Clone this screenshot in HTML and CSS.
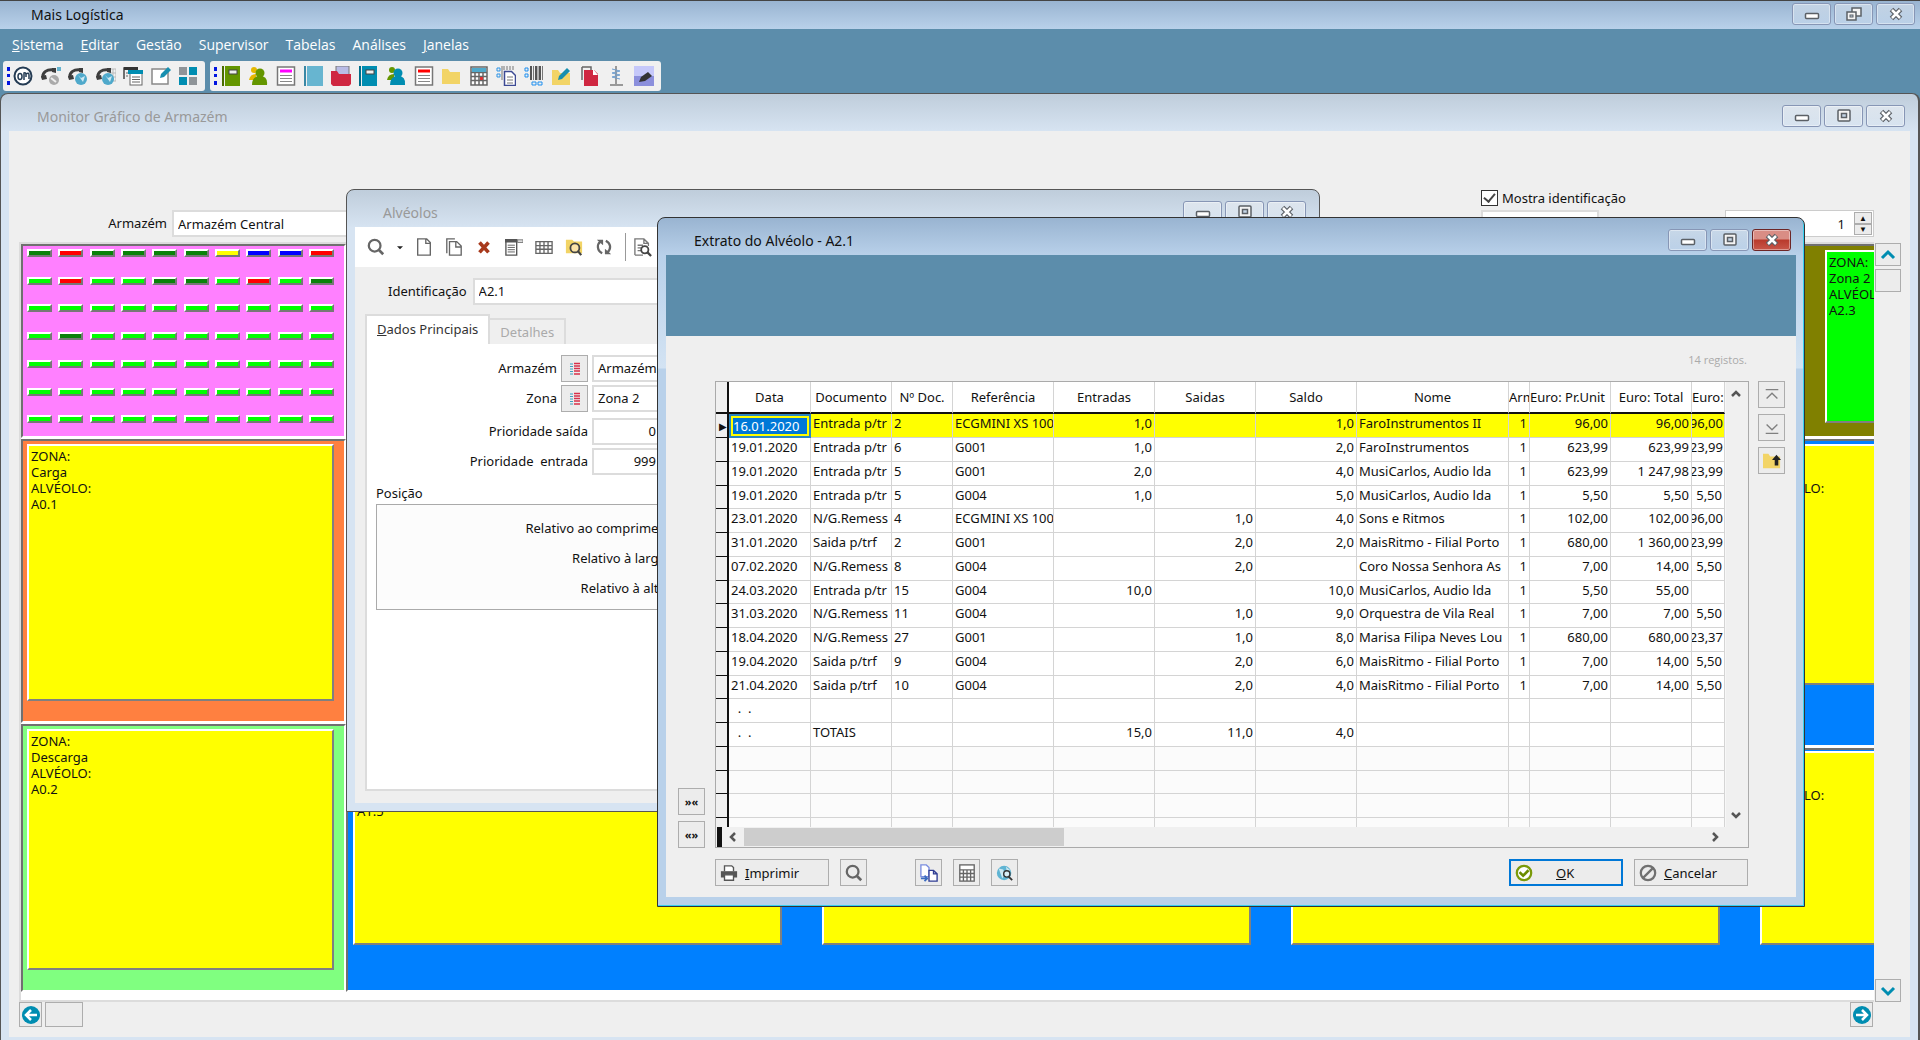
FILE: index.html
```html
<!DOCTYPE html>
<html lang="pt">
<head>
    <meta charset="utf-8">
    <title>Mais Logística</title>
    <link rel="stylesheet" href="styles.css">
</head>
<body>
    <!-- shared icons -->
    <svg class="defs" aria-hidden="true">
        <symbol id="i-min" viewBox="0 0 16 14"><rect x="1.5" y="6.5" width="13" height="5" rx="1" fill="#fff" stroke="#5b6066" stroke-width="1.5"/></symbol>
        <symbol id="i-max" viewBox="0 0 16 14"><rect x="2" y="1" width="12" height="11" rx="1" fill="#f4f4f4" stroke="#5b6066" stroke-width="1.5"/><rect x="5.5" y="4.5" width="5" height="4" fill="#c5d5e6" stroke="#5b6066" stroke-width="1.5"/></symbol>
        <symbol id="i-restore" viewBox="0 0 16 14"><rect x="6" y="1" width="9" height="8" fill="#f4f4f4" stroke="#5b6066" stroke-width="1.5"/><rect x="1" y="5" width="9" height="8" fill="#f4f4f4" stroke="#5b6066" stroke-width="1.5"/><rect x="4" y="8" width="3" height="2" fill="#c5d5e6" stroke="#5b6066"/></symbol>
        <symbol id="i-close" viewBox="0 0 16 14"><path d="M3.5 2.5l9 9M12.5 2.5l-9 9" stroke="#5b6066" stroke-width="5"/><path d="M4 3l8 8M12 3l-8 8" stroke="#fff" stroke-width="2.5"/></symbol>
        <symbol id="i-search" viewBox="0 0 20 20"><circle cx="8.5" cy="8.5" r="6.5" fill="none" stroke="#666" stroke-width="2.5"/><path d="M13 13l5 5" stroke="#666" stroke-width="3"/></symbol>
        <symbol id="i-list" viewBox="0 0 12 14"><path d="M1 2h3M1 4.5h3M1 7h3M1 9.5h3M1 12h3" stroke="#3aa0c0"/><path d="M5 1.5h6M5 4h6M5 6.5h6M5 9h6M5 12h6" stroke="#d6304a" stroke-width="1.5"/></symbol>
        <symbol id="i-calc" viewBox="0 0 20 20"><rect x="2" y="1" width="16" height="18" fill="#fff" stroke="#666" stroke-width="1.5"/><path d="M2 6.5h16M2 10.5h16M2 14.5h16M6 6.5V19M10 6.5V19M14 6.5V19" stroke="#666" stroke-width="1.5"/></symbol>
        <symbol id="i-phone" viewBox="0 0 20 20"><path d="M2 12C1 6 6 3 13 4" fill="none" stroke="#3d3d3d" stroke-width="3"/><path d="M0 10l5-1 1 4-5 1zM11 2l4 0 0 5-4-1z" fill="#3d3d3d"/></symbol>
    </svg>

    <header class="app-title">
        <h1>Mais Logística</h1>
        <div class="win-buttons">
            <button aria-label="Minimizar"><svg><use href="#i-min"/></svg></button>
            <button aria-label="Restaurar"><svg><use href="#i-restore"/></svg></button>
            <button aria-label="Fechar"><svg><use href="#i-close"/></svg></button>
        </div>
    </header>

    <nav class="menu">
        <a href="#"><u>S</u>istema</a>
        <a href="#"><u>E</u>ditar</a>
        <a href="#">Gestão</a>
        <a href="#">Supervisor</a>
        <a href="#">Tabelas</a>
        <a href="#">Análises</a>
        <a href="#"><u>J</u>anelas</a>
    </nav>

    <div class="toolbars">
        <div class="toolbar toolbar-main">
            <i class="grip"></i>
            <button aria-label="Ligar"><svg viewBox="0 0 20 20"><circle cx="10" cy="10" r="8.5" fill="#fff" stroke="#243b53" stroke-width="2"/><ellipse cx="7" cy="10.5" rx="2" ry="3" fill="none" stroke="#243b53" stroke-width="1.5"/><path d="M11 14V7q2-1 2 2v2M13 8q3-2 3 1v4" fill="none" stroke="#243b53" stroke-width="1.5"/></svg></button>
            <button aria-label="Telefone"><svg viewBox="0 0 20 20"><use href="#i-phone"/><circle cx="13" cy="14" r="5" fill="#aaa"/><path d="M10 12l5 4" stroke="#eee" stroke-width="2"/><rect x="16" y="1" width="4" height="4" fill="#65b3cf"/></svg></button>
            <button aria-label="Chamada"><svg viewBox="0 0 20 20"><use href="#i-phone"/><circle cx="13" cy="13" r="6" fill="#4fa9cb"/><path d="M10 9l3 3 4-2-2 6z" fill="#cfe9f3"/></svg></button>
            <button aria-label="Chamadas"><svg viewBox="0 0 20 20"><path d="M13 3h7v12h-6M13 7h7M13 11h7M17 3v12" fill="none" stroke="#bbb"/><use href="#i-phone"/><circle cx="12" cy="13" r="6" fill="#4fa9cb"/><path d="M9 9l3 3 4-2-2 6z" fill="#cfe9f3"/></svg></button>
            <button aria-label="Janelas"><svg viewBox="0 0 20 20"><path d="M1 13V2h13" fill="none" stroke="#444" stroke-width="1.5"/><rect x="1" y="1" width="14" height="3" fill="#333"/><rect x="7" y="5" width="12" height="14" fill="#fff" stroke="#666"/><rect x="5" y="4" width="15" height="4" fill="#008db1"/><path d="M9 11h8M9 13.5h8M9 16h8M3 7h2M3 10h2" stroke="#666"/></svg></button>
            <button aria-label="Editar"><svg viewBox="0 0 20 20"><rect x="1" y="3" width="16" height="15" fill="#fff" stroke="#888" stroke-width="1.5"/><path d="M9 12l1-4 7-7 3 3-7 7z" fill="#178fb0"/></svg></button>
            <button aria-label="Painel"><svg viewBox="0 0 20 20"><path d="M1 1h8v8H1zM11 11h8v8h-8z" fill="#8f9498"/><path d="M11 1h8v8h-8zM1 11h8v8H1z" fill="#008db1"/></svg></button>
        </div>
        <div class="toolbar toolbar-tables">
            <i class="grip"></i>
            <button aria-label="Artigos"><svg viewBox="0 0 20 20"><path d="M4 0h15v20H4z" fill="#649600"/><path d="M1 0h2v20H1z" fill="#496d00"/><rect x="8" y="4" width="8" height="4" fill="#eee" stroke="#444"/></svg></button>
            <button aria-label="Clientes"><svg viewBox="0 0 20 20"><circle cx="6" cy="4" r="3" fill="#e5b800"/><path d="M1 14q1-6 7-6v6z" fill="#e5b800"/><circle cx="12" cy="7" r="4.5" fill="#649600"/><path d="M4 19q0-9 8-9t7 9z" fill="#649600"/></svg></button>
            <button aria-label="Documentos"><svg viewBox="0 0 20 20"><rect x="1.5" y="1" width="17" height="18" fill="#fff" stroke="#777" stroke-width="1.5"/><path d="M4 5h12" stroke="#f0f" stroke-width="3"/><path d="M4 9.5h12M4 12.5h12M4 15.5h12" stroke="#888"/></svg></button>
            <button aria-label="Livro"><svg viewBox="0 0 20 20"><path d="M4 0h16v20H4z" fill="#67b5d0"/><path d="M1 0h2v20H1z" fill="#3a88a5"/></svg></button>
            <button aria-label="Pastas"><svg viewBox="0 0 20 20"><path d="M5 0h13v12H5z" fill="#b9bce5" stroke="#777"/><path d="M0 5h6l2 3h12v10l-2 2H2l-2-2z" fill="#cf2741"/></svg></button>
            <button aria-label="Fornecedores"><svg viewBox="0 0 20 20"><path d="M4 0h15v20H4z" fill="#008db1"/><path d="M1 0h2v20H1z" fill="#006d89"/><rect x="8" y="4" width="8" height="4" fill="#eee" stroke="#444"/></svg></button>
            <button aria-label="Entidades"><svg viewBox="0 0 20 20"><circle cx="6" cy="4" r="3" fill="#649600"/><path d="M1 14q1-6 7-6v6z" fill="#649600"/><circle cx="12" cy="7" r="4.5" fill="#008db1"/><path d="M4 19q0-9 8-9t7 9z" fill="#008db1"/></svg></button>
            <button aria-label="Guias"><svg viewBox="0 0 20 20"><rect x="1.5" y="1" width="17" height="18" fill="#fff" stroke="#777" stroke-width="1.5"/><path d="M4 5h12" stroke="#f00" stroke-width="3"/><path d="M4 9.5h12M4 12.5h12M4 15.5h12" stroke="#888"/></svg></button>
            <button aria-label="Pasta"><svg viewBox="0 0 20 20"><path d="M1 3h6l2 3h10v12H1z" fill="#f2d466"/></svg></button>
            <button aria-label="Calendário"><svg viewBox="0 0 20 20"><use href="#i-calc"/><path d="M3 2h14v4H3z" fill="#4fa9cb"/><path d="M11 11h3v3h-3z" fill="#d33"/></svg></button>
            <button aria-label="Etiquetas"><svg viewBox="0 0 20 20"><path d="M1 2h3v3H1zM1 8h3v3H1z" fill="none" stroke="#2d93e5"/><path d="M6 0v14M8 0v4M11 0v4M14 0v4M17 0v4" stroke="#777"/><path d="M8.5 5.5h7l4 4v10h-11z" fill="#fff" stroke="#3c4a94" stroke-width="1.5"/><path d="M11 11h6M11 14h6M11 17h6" stroke="#777"/></svg></button>
            <button aria-label="Código de barras"><svg viewBox="0 0 20 20"><path d="M1 2h3v3H1zM1 8h3v3H1zM8 16h4v3H8zM14 16h4v3h-4z" fill="none" stroke="#1f8fef"/><path d="M7 0v14M12 0v14M16 0v14" stroke="#555" stroke-width="2"/><path d="M9.5 0v14M14 0v14M18.5 0v14" stroke="#777"/></svg></button>
            <button aria-label="Editar pasta"><svg viewBox="0 0 20 20"><path d="M1 4h6l2 3h10v12H1z" fill="#f2d466"/><path d="M7 14l1-4 8-8 3 3-8 8z" fill="#178fb0"/></svg></button>
            <button aria-label="Copiar"><svg viewBox="0 0 20 20"><path d="M3 1h9v4M3 1v13" fill="none" stroke="#666" stroke-width="1.5"/><path d="M5 4h10l4 4v12H5z" fill="#cf2741"/><path d="M14 3v6h5z" fill="#fff"/></svg></button>
            <button aria-label="Antena"><svg viewBox="0 0 20 20"><path d="M10 0v18M4 19h13" stroke="#999" stroke-width="2"/><path d="M6 3l8 2-8 2 8 2-8 2 8 2" fill="none" stroke="#6f9fd0"/></svg></button>
            <button aria-label="Notas"><svg viewBox="0 0 20 20"><path d="M0 0h20v10H0z" fill="#c5c8fa"/><path d="M0 10h20v10H0z" fill="#8b8fdc"/><path d="M5 16l2-5 7-5 4 4-7 5z" fill="#333"/></svg></button>
        </div>
    </div>

    <main class="window monitor">
        <div class="window-title">
            <h2>Monitor Gráfico de Armazém</h2>
            <div class="win-buttons">
                <button aria-label="Minimizar"><svg><use href="#i-min"/></svg></button>
                <button aria-label="Maximizar"><svg><use href="#i-max"/></svg></button>
                <button aria-label="Fechar"><svg><use href="#i-close"/></svg></button>
            </div>
        </div>
        <div class="window-body monitor-body">
            <div class="filters">
                <label class="filter-label" for="armazem">Armazém</label>
                <input class="field filter-field" id="armazem" type="text" value="Armazém Central">
                <div class="filter-options">
                    <div class="check">
                        <input type="checkbox" id="mostra" checked>
                        <label for="mostra">Mostra identificação</label>
                    </div>
                    <div class="filter-numbers">
                        <select class="field" aria-label="Piso"><option></option></select>
                        <div class="spinner">
                            <input class="field" type="text" aria-label="Zoom" value="1">
                            <div class="spinner-buttons">
                                <button aria-label="Mais">▲</button>
                                <button aria-label="Menos">▼</button>
                            </div>
                        </div>
                    </div>
                </div>
            </div>
            <div class="map-row">
                <div class="map">
                    <div class="map-left">
                        <section class="zone zone-pink" id="chips"></section>
                        <section class="zone zone-orange"><div class="cell">ZONA:<br>Carga<br>ALVÉOLO:<br>A0.1</div></section>
                        <section class="zone zone-green"><div class="cell">ZONA:<br>Descarga<br>ALVÉOLO:<br>A0.2</div></section>
                    </div>
                    <div class="map-right">
                        <section class="zone zone-olive">
                            <div class="cell cell-free"></div>
                            <div class="cell cell-free"></div>
                            <div class="cell cell-free">ZONA:<br>Zona 2<br>ALVÉOLO:<br>A2.3</div>
                        </section>
                        <section class="zone zone-blue">
                            <div class="cell"></div>
                            <div class="cell"></div>
                            <div class="cell"></div>
                            <div class="cell">ZONA:<br>Zona 1<br>ALVÉOLO:<br>A1.4</div>
                        </section>
                        <section class="zone zone-blue zone-last">
                            <div class="cell">ZONA:<br>Zona 1<br>ALVÉOLO:<br>A1.5</div>
                            <div class="cell"></div>
                            <div class="cell"></div>
                            <div class="cell">ZONA:<br>Zona 1<br>ALVÉOLO:<br>A1.8</div>
                        </section>
                    </div>
                </div>
                <div class="scroll-v">
                    <button aria-label="Subir"><svg viewBox="0 0 20 20"><path d="M4 13l6-6 6 6" fill="none" stroke="#008db1" stroke-width="3"/></svg></button>
                    <button aria-label="Posição vertical"></button>
                    <button class="scroll-end" aria-label="Descer"><svg viewBox="0 0 20 20"><path d="M4 7l6 6 6-6" fill="none" stroke="#008db1" stroke-width="3"/></svg></button>
                </div>
            </div>
            <div class="scroll-h">
                <button aria-label="Esquerda"><svg viewBox="0 0 20 20"><circle cx="10" cy="10" r="9" fill="#008db1"/><path d="M16 10H6M10 5l-5 5 5 5" fill="none" stroke="#fff" stroke-width="2.5"/></svg></button>
                <button class="scroll-thumb" aria-label="Posição horizontal"></button>
                <button class="scroll-end" aria-label="Direita"><svg viewBox="0 0 20 20"><circle cx="10" cy="10" r="9" fill="#008db1"/><path d="M4 10h10M10 5l5 5-5 5" fill="none" stroke="#fff" stroke-width="2.5"/></svg></button>
            </div>
        </div>
    </main>

    <section class="window floating alveolos">
        <div class="window-title">
            <h2>Alvéolos</h2>
            <div class="win-buttons">
                <button aria-label="Minimizar"><svg><use href="#i-min"/></svg></button>
                <button aria-label="Maximizar"><svg><use href="#i-max"/></svg></button>
                <button aria-label="Fechar"><svg><use href="#i-close"/></svg></button>
            </div>
        </div>
        <div class="window-body">
            <div class="record-bar">
                <button aria-label="Pesquisar"><svg><use href="#i-search"/></svg></button>
                <button class="caret" aria-label="Opções"><svg viewBox="0 0 8 20"><path d="M0 9h8l-4 4z" fill="#222"/></svg></button>
                <button aria-label="Novo"><svg viewBox="0 0 20 20"><path d="M3 1h10l4 4v14H3zM12 1v5h5" fill="#fff" stroke="#666" stroke-width="1.5"/></svg></button>
                <button aria-label="Duplicar"><svg viewBox="0 0 20 20"><path d="M2 17V1h9" fill="none" stroke="#666" stroke-width="1.5"/><path d="M5 4h8l5 5v10H5zM12 4v6h6" fill="#fff" stroke="#666" stroke-width="1.5"/></svg></button>
                <button aria-label="Eliminar"><svg viewBox="0 0 20 20"><path d="M5 5l10 11M15 5L5 16" stroke="#a83a1d" stroke-width="4"/></svg></button>
                <button aria-label="Lista"><svg viewBox="0 0 20 20"><path d="M1 3h12v16H1z" fill="#fff" stroke="#555" stroke-width="1.5"/><path d="M0 1h14v4H0z" fill="#555"/><path d="M14 2h6v3h-6z" fill="#ddd" stroke="#777"/><path d="M3 8h8M3 10.5h8M3 13h8M3 15.5h8" stroke="#555"/></svg></button>
                <button aria-label="Tabela"><svg viewBox="0 0 20 20"><path d="M1 4h18v13H1zM1 8.5h18M1 12.5h18M5.5 4v13M10 4v13M14.5 4v13" fill="none" stroke="#666" stroke-width="1.5"/></svg></button>
                <button aria-label="Procurar pasta"><svg viewBox="0 0 20 20"><path d="M1 2h7l2 2h9v13H1z" fill="#f2d466"/><circle cx="11" cy="11" r="5" fill="#fbe3a8" stroke="#444" stroke-width="2"/><path d="M14 14l4 5" stroke="#444" stroke-width="2.5"/></svg></button>
                <button aria-label="Atualizar"><svg viewBox="0 0 20 20"><path d="M8 17C2 14 2 7 6 4M12 3c6 3 6 9 2 13" fill="none" stroke="#666" stroke-width="2.5"/><path d="M2 2h7v6zM18 18h-7v-6z" fill="#666"/></svg></button>
                <i class="separator"></i>
                <button aria-label="Pré-visualizar"><svg viewBox="0 0 20 20"><path d="M1 19V1h10l5 5v3M11 1v5h5M1 19h9M4 8h6M4 11h4M4 14h4" fill="none" stroke="#777" stroke-width="1.5"/><circle cx="12" cy="13" r="4" fill="#fff" stroke="#444" stroke-width="2"/><path d="M15 16l4 4" stroke="#444" stroke-width="2.5"/></svg></button>
            </div>
            <div class="ident">
                <label for="ident">Identificação</label>
                <input class="field" id="ident" type="text" value="A2.1">
            </div>
            <div class="tabs">
                <button class="tab active"><span><u>D</u>ados Principais</span></button>
                <button class="tab">Detalhes</button>
            </div>
            <div class="tab-panel">
                <div class="form-row">
                    <label for="f-armazem">Armazém</label>
                    <button class="lookup" aria-label="Escolher armazém"><svg><use href="#i-list"/></svg></button>
                    <input class="field" id="f-armazem" type="text" value="Armazém Central">
                </div>
                <div class="form-row">
                    <label for="f-zona">Zona</label>
                    <button class="lookup" aria-label="Escolher zona"><svg><use href="#i-list"/></svg></button>
                    <input class="field" id="f-zona" type="text" value="Zona 2">
                </div>
                <div class="form-row number-row">
                    <label for="f-saida">Prioridade saída</label>
                    <input class="field number" id="f-saida" type="text" value="0">
                </div>
                <div class="form-row number-row">
                    <label for="f-entrada">Prioridade&nbsp; entrada</label>
                    <input class="field number" id="f-entrada" type="text" value="999">
                </div>
                <h3>Posição</h3>
                <div class="position">
                    <p>Relativo ao comprimento</p>
                    <p>Relativo à largura</p>
                    <p>Relativo à altura</p>
                </div>
            </div>
        </div>
    </section>

    <section class="window floating extrato">
        <div class="window-title">
            <h2>Extrato do Alvéolo - A2.1</h2>
            <div class="win-buttons">
                <button aria-label="Minimizar"><svg><use href="#i-min"/></svg></button>
                <button aria-label="Maximizar"><svg><use href="#i-max"/></svg></button>
                <button class="close" aria-label="Fechar"><svg><use href="#i-close"/></svg></button>
            </div>
        </div>
        <div class="window-body">
            <div class="banner"></div>
            <p class="count">14 registos.</p>
            <div class="grid-area">
                <div class="side side-left">
                    <button class="tool">»«</button>
                    <button class="tool">«»</button>
                </div>
                <div class="grid-box">
                    <div class="grid-main">
                        <div class="grid-clip">
                            <table class="grid">
                                <colgroup>
                                    <col class="c-mark"><col class="c-82"><col class="c-81"><col class="c-61"><col class="c-101"><col class="c-101"><col class="c-101"><col class="c-101"><col class="c-152"><col class="c-21"><col class="c-81"><col class="c-81"><col class="c-33">
                                </colgroup>
                                <thead>
                                    <tr><th></th><th>Data</th><th>Documento</th><th>Nº Doc.</th><th>Referência</th><th>Entradas</th><th>Saidas</th><th>Saldo</th><th>Nome</th><th class="tight">Arm</th><th class="tight">Euro: Pr.Unit</th><th>Euro: Total</th><th class="tight">Euro:</th></tr>
                                </thead>
                                <tbody id="rows"></tbody>
                            </table>
                        </div>
                        <div class="bar-v">
                            <svg viewBox="0 0 12 12"><path d="M2 8l4-4 4 4" fill="none" stroke="#555" stroke-width="2.5"/></svg>
                            <svg viewBox="0 0 12 12"><path d="M2 4l4 4 4-4" fill="none" stroke="#555" stroke-width="2.5"/></svg>
                        </div>
                    </div>
                    <div class="bar-h">
                        <i class="split"></i>
                        <svg viewBox="0 0 12 12"><path d="M8 2L4 6l4 4" fill="none" stroke="#555" stroke-width="2.5"/></svg>
                        <i class="thumb"></i>
                        <svg class="bar-end" viewBox="0 0 12 12"><path d="M4 2l4 4-4 4" fill="none" stroke="#555" stroke-width="2.5"/></svg>
                    </div>
                </div>
                <div class="side side-right">
                    <button class="tool" aria-label="Primeiro"><svg viewBox="0 0 20 20"><path d="M3 4h14M4 14l6-6 6 6" fill="none" stroke="#808080" stroke-width="1.5"/></svg></button>
                    <button class="tool" aria-label="Último"><svg viewBox="0 0 20 20"><path d="M3 16h14M4 6l6 6 6-6" fill="none" stroke="#808080" stroke-width="1.5"/></svg></button>
                    <button class="tool" aria-label="Exportar"><svg viewBox="0 0 20 20"><path d="M0 2h6l2 3h11v13H0z" fill="#f2d466"/><path d="M15 15V8" stroke="#222" stroke-width="4"/><path d="M10 9l5-6 5 6z" fill="#222"/></svg></button>
                </div>
            </div>
            <div class="actions">
                <button class="tool print"><svg viewBox="0 0 20 20"><path d="M5 8V2h8l2 2v4" fill="#fff" stroke="#555" stroke-width="1.5"/><path d="M1 8h18v7H1z" fill="#555"/><path d="M5 12h10v6H5z" fill="#fff" stroke="#555" stroke-width="1.5"/></svg><span><u>I</u>mprimir</span></button>
                <button class="tool" aria-label="Pesquisar"><svg><use href="#i-search"/></svg></button>
                <div class="action-group">
                    <button class="tool" aria-label="Copiar"><svg viewBox="0 0 20 20"><path d="M1 1h6l3 3v10H1z" fill="#fff" stroke="#7c8fe0" stroke-width="1.5"/><path d="M10 7h5l4 4v8h-9zM15 7v4h4" fill="#fff" stroke="#2f3d94" stroke-width="1.5"/><path d="M1 16h6M5 13l3 3-3 3" fill="none" stroke="#3c6cc0" stroke-width="2"/></svg></button>
                    <button class="tool" aria-label="Folha de cálculo"><svg><use href="#i-calc"/></svg></button>
                    <button class="tool" aria-label="Consultar"><svg viewBox="0 0 20 20"><circle cx="9" cy="10" r="8" fill="#5fb4d3"/><path d="M3 5l5 1 2 5-3 5zM11 3l5 4-4 1z" fill="#cbe7f1"/><circle cx="12" cy="11" r="3.5" fill="#d8eef6" stroke="#333" stroke-width="1.5"/><path d="M14 14l4 4" stroke="#333" stroke-width="2"/></svg></button>
                </div>
                <button class="tool ok"><svg viewBox="0 0 20 20"><circle cx="10" cy="10" r="8" fill="#fff" stroke="#7a9a0a" stroke-width="2.5"/><path d="M5 9l4 4 6-6" fill="none" stroke="#6b8c00" stroke-width="3"/></svg><span><u>O</u>K</span></button>
                <button class="tool cancel"><svg viewBox="0 0 20 20"><circle cx="10" cy="10" r="8" fill="none" stroke="#707070" stroke-width="2.5"/><path d="M4 16L16 4" stroke="#707070" stroke-width="2.5"/></svg><span><u>C</u>ancelar</span></button>
            </div>
        </div>
    </section>

    <script>
        // one letter per storage cell: d = dark green, g = green, r = red, y = yellow, b = blue
        const chipRows = ['drddddybbr', 'grggddgrgd', 'gggggggggg', 'gdgggggggg', 'gggggggggg', 'gggggggggg', 'gggggggggg'];

        const movements = [
            ['16.01.2020', 'Entrada p/tr', '2', 'ECGMINI XS 100', '1,0', '', '1,0', 'FaroInstrumentos II', '1', '96,00', '96,00', '96,00'],
            ['19.01.2020', 'Entrada p/tr', '6', 'G001', '1,0', '', '2,0', 'FaroInstrumentos', '1', '623,99', '623,99', '623,99'],
            ['19.01.2020', 'Entrada p/tr', '5', 'G001', '2,0', '', '4,0', 'MusiCarlos, Audio lda', '1', '623,99', '1 247,98', '623,99'],
            ['19.01.2020', 'Entrada p/tr', '5', 'G004', '1,0', '', '5,0', 'MusiCarlos, Audio lda', '1', '5,50', '5,50', '5,50'],
            ['23.01.2020', 'N/G.Remess', '4', 'ECGMINI XS 100', '', '1,0', '4,0', 'Sons e Ritmos', '1', '102,00', '102,00', '96,00'],
            ['31.01.2020', 'Saida p/trf', '2', 'G001', '', '2,0', '2,0', 'MaisRitmo - Filial Porto', '1', '680,00', '1 360,00', '623,99'],
            ['07.02.2020', 'N/G.Remess', '8', 'G004', '', '2,0', '', 'Coro Nossa Senhora As', '1', '7,00', '14,00', '5,50'],
            ['24.03.2020', 'Entrada p/tr', '15', 'G004', '10,0', '', '10,0', 'MusiCarlos, Audio lda', '1', '5,50', '55,00', ''],
            ['31.03.2020', 'N/G.Remess', '11', 'G004', '', '1,0', '9,0', 'Orquestra de Vila Real', '1', '7,00', '7,00', '5,50'],
            ['18.04.2020', 'N/G.Remess', '27', 'G001', '', '1,0', '8,0', 'Marisa Filipa Neves Lou', '1', '680,00', '680,00', '623,37'],
            ['19.04.2020', 'Saida p/trf', '9', 'G004', '', '2,0', '6,0', 'MaisRitmo - Filial Porto', '1', '7,00', '14,00', '5,50'],
            ['21.04.2020', 'Saida p/trf', '10', 'G004', '', '2,0', '4,0', 'MaisRitmo - Filial Porto', '1', '7,00', '14,00', '5,50'],
            ['\u00a0 .\u00a0 .', '', '', '', '', '', '', '', '', '', '', ''],
            ['\u00a0 .\u00a0 .', 'TOTAIS', '', '', '15,0', '11,0', '4,0', '', '', '', '', '']
        ];
        const emptyRows = 4;
        const numeric = [4, 5, 6, 8, 9, 10, 11];

        const chips = document.getElementById('chips');
        chipRows.join('').split('').forEach(function(code) {
            const chip = document.createElement('i');
            chip.className = 'chip chip-' + code;
            chips.appendChild(chip);
        });

        const body = document.getElementById('rows');
        function addRow(values, className) {
            const row = body.insertRow();
            row.className = className;
            const mark = row.insertCell();
            mark.className = 'mark';
            values.forEach(function(value, i) {
                const cell = row.insertCell();
                if (numeric.includes(i)) cell.className = i === 11 ? 'num cut' : 'num';
                cell.textContent = value;
            });
        }
        movements.forEach(function(values, i) {
            addRow(values, i === 0 ? 'selected' : '');
        });
        for (let i = 0; i < emptyRows; i++) {
            addRow(new Array(12).fill(''), 'empty');
        }
    </script>
</body>
</html>
```
FILE: styles.css
```css
* {
    box-sizing: border-box;
}
body {
    margin: 0;
    height: 100vh;
    display: flex;
    flex-direction: column;
    overflow: hidden;
    position: relative;
    background: #5c8dab;
    font-family: "Noto Sans", "Open Sans", sans-serif;
    font-size: 13px;
    line-height: 16px;
    color: #111;
}
h1, h2, h3, p {
    margin: 0;
    font-size: 13px;
    font-weight: normal;
}
button, input, select {
    font: inherit;
    color: inherit;
    margin: 0;
    padding: 0;
}
button {
    background: #ececec;
    border: 1px solid #adadad;
    display: flex;
    align-items: center;
    justify-content: center;
}
svg {
    display: block;
    flex: none;
}
.defs {
    position: absolute;
    width: 0;
    height: 0;
}

/* application frame */
.app-title {
    height: 29px;
    border-top: 1px solid #444;
    background: linear-gradient(#99b4d1, #b9d1ea);
    display: flex;
    justify-content: space-between;
    padding: 2px 5px 0 31px;
}
.app-title h1, .window-title h2 {
    font-size: 14px;
    line-height: 23px;
}
.win-buttons {
    display: flex;
    gap: 3px;
}
.win-buttons button {
    width: 39px;
    height: 22px;
    border: 1px solid #8796b5;
    border-radius: 3px;
    background: linear-gradient(rgba(255, 255, 255, 0.4), rgba(255, 255, 255, 0.1));
    box-shadow: inset 0 0 0 1px rgba(255, 255, 255, 0.4);
}
.win-buttons svg {
    width: 16px;
    height: 14px;
}
.win-buttons .close {
    background: linear-gradient(#d98d85 45%, #b93a2c 50%, #c8574a);
    border-color: #6d2626;
}
.menu {
    display: flex;
    gap: 17px;
    padding: 6px 12px;
    font-family: "Open Sans", sans-serif;
    font-size: 14px;
    line-height: 20px;
}
.menu a {
    color: #fff;
    text-decoration: none;
}
.toolbars {
    display: flex;
    gap: 5px;
    padding: 0 3px 2px;
}
.toolbar {
    height: 30px;
    background: #f0f0f0;
    border-radius: 3px;
    display: flex;
    align-items: center;
    justify-content: space-between;
    padding: 0 7px 0 4px;
}
.toolbar-main {
    width: 202px;
}
.toolbar-tables {
    width: 451px;
}
.toolbar button {
    background: none;
    border: 0;
}
.toolbar svg {
    width: 20px;
    height: 20px;
}
.grip {
    height: 18px;
    border-left: 3px dotted #0014e0;
    margin-right: -4px;
}

/* child windows */
.window {
    background: #d7e4f2;
    border: 1px solid #555;
    border-radius: 8px 8px 0 0;
    padding: 0 8px 8px;
    display: flex;
    flex-direction: column;
    overflow: hidden;
    background-image: linear-gradient(#bfcddb, #d7e4f2 38px);
}
.window-title {
    height: 37px;
    display: flex;
    justify-content: space-between;
    padding: 11px 5px 0 28px;
    color: #999;
}
.window-body {
    flex: 1;
    min-height: 0;
    background: #efefef;
    display: flex;
    flex-direction: column;
}
.floating {
    position: absolute;
}
.field {
    height: 27px;
    border: 2px solid #dcdcdc;
    background: #fff;
    padding: 0 4px;
    min-width: 0;
}

/* warehouse monitor */
.monitor {
    flex: 1;
    min-height: 0;
    border-width: 1px 2px 0 1px;
    padding-bottom: 3px;
}
.monitor-body {
    padding: 54px 9px 10px 10px;
}
.filters {
    display: flex;
    align-items: flex-end;
    gap: 5px;
    padding-right: 27px;
}
.filter-label {
    width: 148px;
    text-align: right;
    line-height: 27px;
}
.filter-field {
    width: 500px;
}
.filter-options {
    margin-left: auto;
    width: 393px;
}
.check {
    display: flex;
    align-items: center;
    gap: 4px;
    height: 25px;
}
.check input {
    appearance: none;
    width: 17px;
    height: 16px;
    border: 1px solid #333;
    background: #fff;
    display: grid;
    place-items: center;
}
.check input:checked::after {
    content: "";
    width: 5px;
    height: 9px;
    margin-top: -3px;
    border: solid #444;
    border-width: 0 2px 2px 0;
    rotate: 40deg;
}
.filter-numbers {
    display: flex;
    justify-content: space-between;
}
.filter-numbers select {
    width: 118px;
}
.spinner {
    display: flex;
    width: 149px;
    background: #fff;
    border: 1px solid #ccc;
}
.spinner .field {
    flex: 1;
    border: 0;
    height: 25px;
    text-align: right;
    padding-right: 8px;
}
.spinner-buttons {
    width: 20px;
    display: flex;
    flex-direction: column;
    padding: 1px;
}
.spinner-buttons button {
    flex: 1;
    font-size: 8px;
    line-height: 8px;
}
.map-row {
    flex: 1;
    min-height: 0;
    display: flex;
    margin-top: 5px;
    gap: 1px;
}
.map {
    flex: 1;
    min-width: 0;
    display: flex;
    background: #fff;
    border: 2px solid #dcdcdc;
    border-right: 0;
    padding-bottom: 8px;
}
.map-left, .map-right {
    display: grid;
    gap: 1px;
}
.map-left {
    width: 325px;
    flex: none;
    grid-template-rows: 194fr 283fr 268fr;
}
.map-right {
    flex: 1;
    min-width: 0;
    grid-template-rows: 194fr 307fr 244fr;
}
.zone {
    min-height: 0;
    min-width: 0;
    overflow: hidden;
    display: grid;
    border: 2px solid #fff;
    border-top-color: #707070;
    border-left-color: #707070;
}
.zone-pink {
    background: #ff80ff;
    grid-template-columns: repeat(10, 25px);
    grid-auto-rows: 8px;
    justify-content: space-between;
    align-content: space-between;
    padding: 3px 10px 13px 4px;
}
.zone-orange {
    background: #ff8040;
    padding: 3px 10px 20px 4px;
}
.zone-green {
    background: #80ff80;
    padding: 3px 10px 20px 4px;
}
.zone-olive {
    background: #808000;
    grid-template-columns: repeat(3, 696px);
    gap: 40px;
    padding: 4px 5px 13px;
}
.zone-blue {
    background: #0080ff;
    grid-template-columns: repeat(4, 429px);
    gap: 40px;
    padding: 3px 5px 60px;
}
.zone-last {
    padding: 1px 5px 45px;
}
.map-right .zone {
    border-right: 0;
}
.chip {
    border: 2px solid #fff;
    border-right-color: #777;
    border-bottom-color: #777;
}
.chip-d { background: #0a820a; }
.chip-g { background: #00ff00; }
.chip-r { background: #ff0000; }
.chip-y { background: #ffff00; }
.chip-b { background: #0000ff; }
.cell {
    background: #ffff00;
    border: 2px solid #fff;
    border-right-color: #808080;
    border-bottom-color: #808080;
    padding: 2px;
    overflow: hidden;
}
.cell-free {
    background: #00ff00;
}
.scroll-v {
    width: 26px;
    display: flex;
    flex-direction: column;
    gap: 3px;
    padding-top: 1px;
    flex: none;
}
.scroll-v button {
    height: 23px;
}
.scroll-v .scroll-end {
    margin-top: auto;
}
.scroll-v svg, .scroll-h svg {
    width: 20px;
    height: 20px;
}
.scroll-h {
    display: flex;
    gap: 3px;
    padding-right: 28px;
}
.scroll-h button {
    width: 23px;
    height: 25px;
}
.scroll-h .scroll-thumb {
    width: 38px;
}
.scroll-h .scroll-end {
    margin-left: auto;
}

/* storage cell record */
.alveolos {
    left: 346px;
    top: 189px;
    width: 974px;
    height: 623px;
}
.record-bar {
    height: 40px;
    background: #fff;
    display: flex;
    align-items: center;
    gap: 12px;
    padding-left: 12px;
}
.record-bar button {
    border: 0;
    background: none;
}
.record-bar svg {
    width: 18px;
    height: 20px;
}
.record-bar .caret svg {
    width: 6px;
}
.separator {
    height: 28px;
    border-left: 1px solid #999;
    margin-right: -4px;
}
.ident {
    display: flex;
    gap: 6px;
    padding: 11px 10px 9px 33px;
    line-height: 27px;
}
.ident .field {
    flex: 1;
}
.tabs {
    display: flex;
    align-items: flex-end;
    padding-left: 10px;
}
.tab {
    height: 26px;
    padding: 0 10px;
    border: 2px solid #dcdcdc;
    border-bottom: 0;
    border-left: 0;
    background: #efefef;
    color: #aaa;
}
.tab.active {
    height: 30px;
    padding-bottom: 2px;
    background: #fff;
    color: #333;
    border-left: 2px solid #dcdcdc;
}
.tab-panel {
    flex: 1;
    margin: 0 11px 12px 10px;
    background: #fff;
    border: 2px solid #dcdcdc;
    border-top: 0;
    padding: 11px 9px;
}
.form-row {
    display: flex;
    gap: 4px;
    margin-bottom: 3px;
    line-height: 27px;
}
.form-row label {
    width: 181px;
    text-align: right;
}
.form-row .field {
    width: 300px;
}
.form-row .number {
    width: 70px;
    text-align: right;
}
.number-row label {
    width: 212px;
}
.form-row:nth-child(3) {
    margin-top: 6px;
}
.lookup {
    width: 27px;
    height: 27px;
}
.lookup svg {
    width: 12px;
    height: 14px;
}
.tab-panel h3 {
    margin: 10px 0 3px;
}
.position {
    height: 106px;
    width: 500px;
    border: 1px solid #aaa;
    background: #fcfcfc;
    padding: 8px 196px 8px 0;
    text-align: right;
    line-height: 30px;
}

/* movements dialog */
.extrato {
    left: 657px;
    top: 217px;
    width: 1148px;
    height: 690px;
    background: linear-gradient(#99b4d1, #b9d1ea 38px, #d3e3f3 150px, #b9d1ea 151px);
    border-color: #333;
    box-shadow: inset -1px -1px 0 #35d0ef;
    padding-bottom: 9px;
}
.extrato .window-title {
    color: #111;
}
.banner {
    height: 81px;
    background: #5c8dab;
}
.count {
    font-family: "Open Sans", sans-serif;
    font-size: 11px;
    color: #aaa;
    text-align: right;
    padding: 16px 49px 13px;
}
.grid-area {
    display: flex;
    height: 467px;
    padding: 0 11px 0 12px;
}
.side {
    display: flex;
    flex-direction: column;
    gap: 6px;
}
.side-left {
    justify-content: flex-end;
    margin-right: 10px;
}
.side-right {
    margin-left: 9px;
}
.tool {
    width: 27px;
    height: 27px;
    flex: none;
}
.tool svg {
    width: 18px;
    height: 20px;
}
.side-left .tool {
    font-size: 11px;
    font-weight: bold;
}
.grid-box {
    flex: 1;
    min-width: 0;
    border: 1px solid #aaa;
    background: #f7f7f7;
    display: flex;
    flex-direction: column;
}
.grid-main {
    flex: 1;
    min-height: 0;
    display: flex;
}
.grid-clip {
    flex: 1;
    min-width: 0;
    overflow: hidden;
}
.grid {
    table-layout: fixed;
    width: 1009px;
    border-collapse: separate;
    border-spacing: 0;
    background: #fff;
}
.c-mark { width: 13px; }
.c-21 { width: 21px; }
.c-33 { width: 33px; }
.c-61 { width: 61px; }
.c-81 { width: 81px; }
.c-82 { width: 82px; }
.c-101 { width: 101px; }
.c-152 { width: 152px; }
.grid th, .grid td {
    padding: 0 2px;
    white-space: nowrap;
    overflow: hidden;
    border-right: 1px solid #d4d4d4;
    border-bottom: 1px solid #d4d4d4;
    font-weight: normal;
    text-align: left;
    vertical-align: top;
}
.grid th {
    height: 32px;
    text-align: center;
    vertical-align: middle;
    border-bottom: 2px solid #111;
}
.grid .tight {
    padding: 0;
    text-align: left;
}
.grid td {
    height: 24px;
    line-height: 18px;
}
.grid tr:nth-child(4n) td {
    height: 23px;
}
.grid .num {
    text-align: right;
}
.grid .cut {
    direction: rtl;
}
.grid th:first-child, .grid .mark {
    background: #f0f0f0;
    border-right: 2px solid #111;
}
.grid .mark {
    border-bottom-color: #111;
}
.selected td {
    background: #ffff00;
}
.grid .selected .mark {
    padding: 3px 0 0;
    text-align: right;
    font-size: 10px;
}
.selected .mark::after {
    content: "▶";
}
.grid .selected td:nth-child(2) {
    background: #0078d7;
    background-clip: padding-box;
    border: 2px solid #2a86c0;
    padding: 0 2px;
    color: #fff;
    outline: 2px solid #ffff00;
    outline-offset: -4px;
    vertical-align: middle;
}
.empty td {
    background: #fbfbfb;
}
.bar-v {
    width: 22px;
    display: flex;
    flex-direction: column;
    justify-content: space-between;
    align-items: center;
    padding: 6px 2px 6px 0;
    background: #f0f0f0;
}
.bar-v svg, .bar-h svg {
    width: 12px;
    height: 12px;
}
.bar-h {
    height: 20px;
    display: flex;
    align-items: center;
    gap: 5px;
    padding-left: 1px;
    background: #f0f0f0;
}
.split {
    width: 5px;
    height: 20px;
    background: #111;
}
.thumb {
    width: 320px;
    height: 18px;
    background: #cdcdcd;
}
.bar-end {
    margin-left: auto;
    margin-right: 27px;
}
.actions {
    display: flex;
    gap: 11px;
    padding: 11px 48px 10px 49px;
}
.print, .cancel, .ok {
    width: 114px;
    justify-content: flex-start;
    gap: 7px;
    padding: 0 4px;
}
.ok {
    border: 2px solid #0078d7;
    margin-left: auto;
}
.ok span {
    flex: 1;
    padding-left: 16px;
    text-align: left;
}
.action-group {
    display: flex;
    gap: 11px;
    margin-left: 37px;
}
```
